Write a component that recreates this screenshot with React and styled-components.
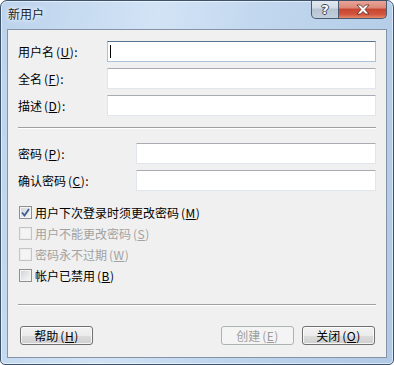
import React from 'react';
import styled, { createGlobalStyle } from 'styled-components';

const GlobalStyle = createGlobalStyle`
  html, body {
    margin: 0;
    padding: 0;
    background: #ffffff;
  }
  body {
    font-family: 'Noto Sans CJK SC', 'Noto Sans', sans-serif;
    font-size: 12px;
    color: #000;
  }
`;

const Window = styled.div`
  width: 394px;
  height: 365px;
  box-sizing: border-box;
  border: 1px solid #3d526b;
  border-radius: 7px 7px 5px 5px;
  background: linear-gradient(100deg, #bcd3ec 0%, #d2e3f5 35%, #c0d6ee 60%, #b0c9e5 100%);
  box-shadow: inset 0 0 0 1px rgba(255, 255, 255, 0.55);
  padding: 0 6px 6px;
  display: flex;
  flex-direction: column;
  overflow: hidden;
`;

const TitleBar = styled.div`
  height: 28px;
  display: flex;
  align-items: flex-start;
  justify-content: space-between;
`;

const Title = styled.div`
  padding: 6px 0 0 1px;
  font-size: 12px;
  line-height: 14px;
  color: #1b1b1b;
  text-shadow: 0 0 6px rgba(255, 255, 255, 0.95), 0 0 3px rgba(255, 255, 255, 0.9);
`;

const Caption = styled.div`
  display: flex;
  margin-top: -1px;
`;

const CaptionButton = styled.div`
  height: 19px;
  box-sizing: border-box;
  display: flex;
  align-items: center;
  justify-content: center;
  border: 1px solid #4b5a6e;
  border-top: none;
  ${({ $close }) =>
    $close
      ? `
    width: 48px;
    border-radius: 0 0 5px 0;
    border-left: none;
    background: linear-gradient(#e9a99c 0%, #dc8777 45%, #c74530 50%, #d3553d 80%, #e48a6c 100%);
  `
      : `
    width: 28px;
    border-radius: 0 0 0 5px;
    background: linear-gradient(#e3eaf2 0%, #d3dce6 45%, #b6c3d2 50%, #c3cfdc 100%);
  `}
`;

const HelpGlyph = styled.span`
  font-family: 'DejaVu Sans', sans-serif;
  font-weight: bold;
  font-size: 13px;
  line-height: 13px;
  color: #fff;
  text-shadow: -1px 0 #3b4656, 1px 0 #3b4656, 0 -1px #3b4656, 0 1px #3b4656;
`;

const Client = styled.div`
  flex: 1;
  border: 1px solid #8493a6;
  background: #f0f0f0;
  padding: 0 10px;
  display: flex;
  flex-direction: column;
`;

const FieldGroup = styled.div`
  display: flex;
  flex-direction: column;
  gap: 6px;
  margin-top: ${({ $top }) => $top}px;
`;

const FieldRow = styled.div`
  display: flex;
  align-items: center;
  height: 21px;
`;

const Label = styled.label`
  width: ${({ $width }) => $width}px;
  flex: none;
  line-height: 14px;
  white-space: nowrap;
`;

const Input = styled.div`
  flex: 1;
  height: 21px;
  box-sizing: border-box;
  background: #fff;
  border: 1px solid #e1e5ec;
  border-top-color: #a8abb2;
  position: relative;
  ${({ $focused }) =>
    $focused &&
    `
    border-color: #a9c3da;
    border-top-color: #56748f;
  `}
`;

const Caret = styled.span`
  position: absolute;
  left: 2px;
  top: 3px;
  width: 1px;
  height: 13px;
  background: #000;
`;

const Key = styled.span`
  margin-left: 2px;
  letter-spacing: 0.5px;
`;

const Separator = styled.div`
  height: 0;
  border-top: 1px solid #a0a0a0;
  border-bottom: 1px solid #ffffff;
  margin-top: ${({ $top }) => $top}px;
`;

const CheckList = styled.div`
  display: flex;
  flex-direction: column;
  margin-top: 11px;
`;

const CheckRow = styled.div`
  display: flex;
  align-items: center;
  height: 21px;
  gap: 3px;
  padding-left: 1px;
  color: ${({ $disabled }) => ($disabled ? '#a2a2a2' : '#000')};
`;

const Box = styled.span`
  width: 13px;
  height: 13px;
  box-sizing: border-box;
  flex: none;
  display: flex;
  align-items: center;
  justify-content: center;
  border: 1px solid ${({ $disabled }) => ($disabled ? '#c5c5c5' : '#8e8f8f')};
  background: ${({ $disabled }) =>
    $disabled
      ? '#f4f4f4'
      : 'linear-gradient(135deg, #cdd0d6 0%, #e4e6e9 50%, #f7f7f7 100%)'};
  box-shadow: inset 0 0 0 1px ${({ $disabled }) => ($disabled ? '#ececec' : '#f4f4f4')};
`;

const ButtonRow = styled.div`
  display: flex;
  align-items: center;
  margin-top: 20px;
  padding: 0 1px 0 2px;
`;

const Spacer = styled.div`
  flex: 1;
`;

const Button = styled.button`
  width: 73px;
  height: 19px;
  box-sizing: border-box;
  padding: 0;
  margin-left: ${({ $gap }) => $gap || 0}px;
  font-family: 'Noto Sans CJK SC', 'Noto Sans', sans-serif;
  font-size: 12px;
  line-height: 14px;
  border-radius: 3px;
  border: 1px solid ${({ disabled }) => (disabled ? '#adb2b5' : '#707070')};
  color: ${({ disabled }) => (disabled ? '#9c9c9c' : '#000')};
  background: ${({ disabled }) =>
    disabled
      ? '#f4f4f4'
      : 'linear-gradient(#f2f2f2 0%, #ebebeb 50%, #dddddd 50%, #cfcfcf 100%)'};
  box-shadow: inset 0 0 0 1px ${({ disabled }) => (disabled ? '#f4f4f4' : 'rgba(255,255,255,0.75)')};
`;

function Mn({ k }) {
  return (
    <Key>
      (<u>{k}</u>)
    </Key>
  );
}

function Check({ checked, disabled, children }) {
  return (
    <CheckRow $disabled={disabled}>
      <Box $disabled={disabled}>
        {checked && (
          <svg width="9" height="9" viewBox="0 0 9 9">
            <path d="M1 4.5 L3.5 7.5 L8 1" fill="none" stroke="#3c5a94" strokeWidth="1.8" />
          </svg>
        )}
      </Box>
      <span>{children}</span>
    </CheckRow>
  );
}

export default function App() {
  return (
    <>
      <GlobalStyle />
      <Window>
        <TitleBar>
          <Title>新用户</Title>
          <Caption>
            <CaptionButton>
              <HelpGlyph>?</HelpGlyph>
            </CaptionButton>
            <CaptionButton $close>
              <svg width="14" height="11" viewBox="0 0 14 11">
                <path
                  d="M1 1 H4.5 L7 3.6 L9.5 1 H13 L9 5.5 L13 10 H9.5 L7 7.4 L4.5 10 H1 L5 5.5 Z"
                  fill="#fff"
                  stroke="#5a2a22"
                  strokeWidth="0.8"
                />
              </svg>
            </CaptionButton>
          </Caption>
        </TitleBar>
        <Client>
          <FieldGroup $top={11}>
            <FieldRow>
              <Label $width={89}>用户名<Mn k="U" />:</Label>
              <Input $focused>
                <Caret />
              </Input>
            </FieldRow>
            <FieldRow>
              <Label $width={89}>全名<Mn k="F" />:</Label>
              <Input />
            </FieldRow>
            <FieldRow>
              <Label $width={89}>描述<Mn k="D" />:</Label>
              <Input />
            </FieldRow>
          </FieldGroup>
          <Separator $top={11} />
          <FieldGroup $top={14}>
            <FieldRow>
              <Label $width={118}>密码<Mn k="P" />:</Label>
              <Input />
            </FieldRow>
            <FieldRow>
              <Label $width={118}>确认密码<Mn k="C" />:</Label>
              <Input />
            </FieldRow>
          </FieldGroup>
          <CheckList>
            <Check checked>用户下次登录时须更改密码<Mn k="M" /></Check>
            <Check disabled>用户不能更改密码<Mn k="S" /></Check>
            <Check disabled>密码永不过期<Mn k="W" /></Check>
            <Check>帐户已禁用<Mn k="B" /></Check>
          </CheckList>
          <Separator $top={18} />
          <ButtonRow>
            <Button>帮助<Mn k="H" /></Button>
            <Spacer />
            <Button disabled>创建<Mn k="E" /></Button>
            <Button $gap={8}>关闭<Mn k="O" /></Button>
          </ButtonRow>
        </Client>
      </Window>
    </>
  );
}
